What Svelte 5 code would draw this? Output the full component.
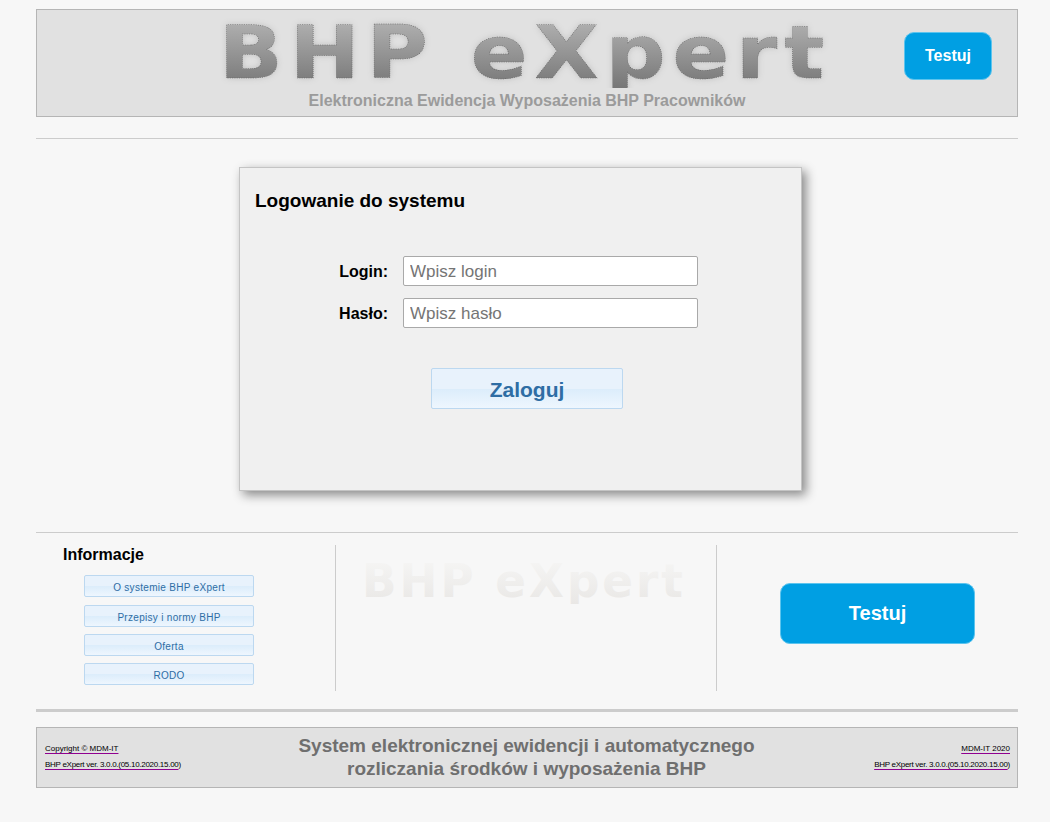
<script>
	const links = ['O systemie BHP eXpert', 'Przepisy i normy BHP', 'Oferta', 'RODO'];
</script>

<div class="page">
	<header class="top">
		<div></div>
		<div class="brand">
			<svg class="logo" width="620" height="78" viewBox="0 0 620 78">
				<defs>
					<linearGradient id="logoFill" x1="0" y1="0" x2="0" y2="1">
						<stop offset="0" stop-color="#bababa" />
						<stop offset="1" stop-color="#707070" />
					</linearGradient>
					<filter id="logoGlow" x="-5%" y="-20%" width="110%" height="140%">
						<feGaussianBlur stdDeviation="3" />
					</filter>
				</defs>
				<text class="logo-text glow" x="9" y="68" textLength="612" lengthAdjust="spacingAndGlyphs" filter="url(#logoGlow)">BHP eXpert</text>
				<text class="logo-text face" x="9" y="68" textLength="612" lengthAdjust="spacingAndGlyphs" fill="url(#logoFill)">BHP eXpert</text>
			</svg>
			<p class="tagline">Elektroniczna Ewidencja Wyposażenia BHP Pracowników</p>
		</div>
		<div class="top-action">
			<button class="try small">Testuj</button>
		</div>
	</header>

	<hr class="rule first" />

	<section class="login">
		<h1>Logowanie do systemu</h1>
		<form class="fields" on:submit|preventDefault>
			<label for="login">Login:</label>
			<input id="login" type="text" placeholder="Wpisz login" />
			<label for="pass">Hasło:</label>
			<input id="pass" type="password" placeholder="Wpisz hasło" />
		</form>
		<button class="glossy enter">Zaloguj</button>
	</section>

	<hr class="rule second" />

	<section class="info">
		<div class="col links">
			<h2>Informacje</h2>
			<ul>
				{#each links as link}
					<li><button class="glossy">{link}</button></li>
				{/each}
			</ul>
		</div>
		<div class="col mark">
			<svg width="360" height="59" viewBox="0 0 360 59">
				<defs>
					<linearGradient id="markFill" x1="0" y1="0" x2="0" y2="1">
						<stop offset="0" stop-color="#f7f7f6" />
						<stop offset="1" stop-color="#e8e6e4" />
					</linearGradient>
				</defs>
				<text class="mark-text" x="26" y="52" textLength="324" lengthAdjust="spacingAndGlyphs" fill="url(#markFill)">BHP eXpert</text>
			</svg>
		</div>
		<div class="col cta">
			<button class="try large">Testuj</button>
		</div>
	</section>

	<hr class="rule thick" />

	<footer class="bottom">
		<div class="meta">
			<a href="#copy">Copyright © MDM-IT</a>
			<span class="ver"><a href="#ver">BHP eXpert ver. 3.0.0.(05.10.2020.15.00</a>)</span>
		</div>
		<p class="slogan">System elektronicznej ewidencji i automatycznego<br />rozliczania środków i wyposażenia BHP</p>
		<div class="meta right">
			<a href="#mdm">MDM-IT 2020</a>
			<span class="ver"><a href="#ver">BHP eXpert ver. 3.0.0.(05.10.2020.15.00</a>)</span>
		</div>
	</footer>
</div>

<style>
	:global(body) {
		background: #f7f7f7;
		font-family: "Liberation Sans", Arial, sans-serif;
	}

	.page {
		width: 982px;
		margin-left: 36px;
		padding-top: 9px;
		padding-bottom: 34px;
	}

	.top {
		box-sizing: border-box;
		height: 108px;
		background: #e1e1e1;
		border: 1px solid #b5b5b5;
		display: grid;
		grid-template-columns: 1fr 620px 1fr;
	}
	.brand {
		text-align: center;
	}
	.logo {
		display: block;
		margin: 0 0 0 -7px;
	}
	.logo-text {
		font-family: "DejaVu Sans", sans-serif;
		font-weight: bold;
		font-size: 73px;
		letter-spacing: 6px;
	}
	.glow {
		fill: #8a8a8a;
		opacity: 0.4;
	}
	.face {
		stroke: #5f5f5f;
		stroke-width: 0.5;
		stroke-dasharray: 1 1;
	}
	.tagline {
		margin: 4px 0 0;
		font-size: 16px;
		font-weight: bold;
		color: #9b9b9b;
		white-space: nowrap;
	}
	.top-action {
		display: flex;
		justify-content: flex-end;
		padding: 22px 25px 0 0;
	}

	button {
		font-family: inherit;
		cursor: pointer;
	}
	.try {
		background: #009fe3;
		color: #fff;
		font-weight: bold;
		border: 1px solid #5cc4ee;
	}
	.try.small {
		width: 88px;
		height: 48px;
		font-size: 16px;
		border-radius: 10px;
	}
	.try.large {
		width: 195px;
		height: 61px;
		font-size: 20px;
		border-radius: 10px;
	}

	.glossy {
		background: linear-gradient(#e8f2fc 0 50%, #dcedfb 52%, #eef6fe 100%);
		border: 1px solid #bcd8f0;
		border-radius: 2px;
		color: #2e6da4;
	}

	.rule {
		border: 0;
		margin: 0;
		height: 1px;
		background: #cccccc;
	}
	.rule.first {
		margin-top: 21px;
	}
	.rule.second {
		margin-top: 41px;
	}
	.rule.thick {
		height: 3px;
		margin-top: 18px;
	}

	.login {
		box-sizing: border-box;
		width: 563px;
		height: 324px;
		margin: 28px 0 0 203px;
		padding: 22px 15px 0;
		background: #f0f0f0;
		border: 1px solid #c4c4c4;
		box-shadow: 4px 4px 10px rgba(0, 0, 0, 0.45);
	}
	h1 {
		margin: 0;
		font-size: 19px;
		line-height: 21px;
		font-weight: bold;
		color: #000;
	}
	.fields {
		display: grid;
		grid-template-columns: 133px 295px;
		column-gap: 15px;
		row-gap: 12px;
		align-items: center;
		margin-top: 45px;
	}
	label {
		padding-top: 2px;
		font-size: 16px;
		font-weight: bold;
		color: #000;
		text-align: right;
	}
	input {
		box-sizing: border-box;
		height: 30px;
		width: 295px;
		padding: 1px 6px 0;
		font-family: inherit;
		font-size: 17px;
		background: #fff;
		border: 1px solid #a9a9a9;
		border-radius: 2px;
	}
	input::placeholder {
		color: #757575;
		opacity: 1;
	}
	.enter {
		display: block;
		width: 192px;
		height: 41px;
		margin: 40px 0 0 176px;
		padding: 2px 0 0;
		font-size: 21px;
		font-weight: bold;
	}

	.info {
		display: grid;
		grid-template-columns: 300px 381px 1fr;
		height: 146px;
		margin-top: 12px;
	}
	.col {
		box-sizing: border-box;
	}
	.links {
		border-right: 1px solid #cccccc;
		padding-left: 27px;
	}
	h2 {
		margin: 1px 0 0;
		font-size: 16px;
		line-height: 18px;
		font-weight: bold;
		color: #000;
	}
	ul {
		list-style: none;
		margin: 11px 0 0 21px;
		padding: 0;
		display: flex;
		flex-direction: column;
		gap: 7px;
	}
	li:first-child {
		margin-bottom: 1px;
	}
	li button {
		display: block;
		width: 170px;
		height: 22px;
		padding: 2px 0 0;
		font-size: 10px;
		letter-spacing: 0.3px;
	}
	.mark {
		border-right: 1px solid #cccccc;
	}
	.mark svg {
		display: block;
	}
	.mark-text {
		font-family: "DejaVu Sans", sans-serif;
		font-weight: bold;
		font-size: 46px;
		letter-spacing: 3px;
	}
	.cta {
		padding: 38px 0 0 63px;
	}

	.bottom {
		box-sizing: border-box;
		height: 61px;
		margin-top: 15px;
		padding: 0 7px 0 8px;
		background: #e1e1e1;
		border: 1px solid #b5b5b5;
		display: grid;
		grid-template-columns: 1fr 460px 1fr;
		align-items: center;
	}
	.meta {
		display: flex;
		flex-direction: column;
		gap: 4px;
		padding-bottom: 2px;
		font-size: 8px;
		line-height: 12px;
		color: #000;
		white-space: nowrap;
	}
	.ver {
		letter-spacing: -0.28px;
	}
	.meta a {
		color: #000;
		text-decoration: underline;
		text-decoration-color: #900090;
		text-decoration-thickness: 1px;
		text-underline-offset: 2px;
	}
	.meta.right {
		text-align: right;
	}
	.slogan {
		margin: 0 0 0 -2px;
		padding-bottom: 2px;
		text-align: center;
		font-size: 19px;
		line-height: 23px;
		font-weight: bold;
		color: #6f6f6f;
		white-space: nowrap;
	}
</style>
